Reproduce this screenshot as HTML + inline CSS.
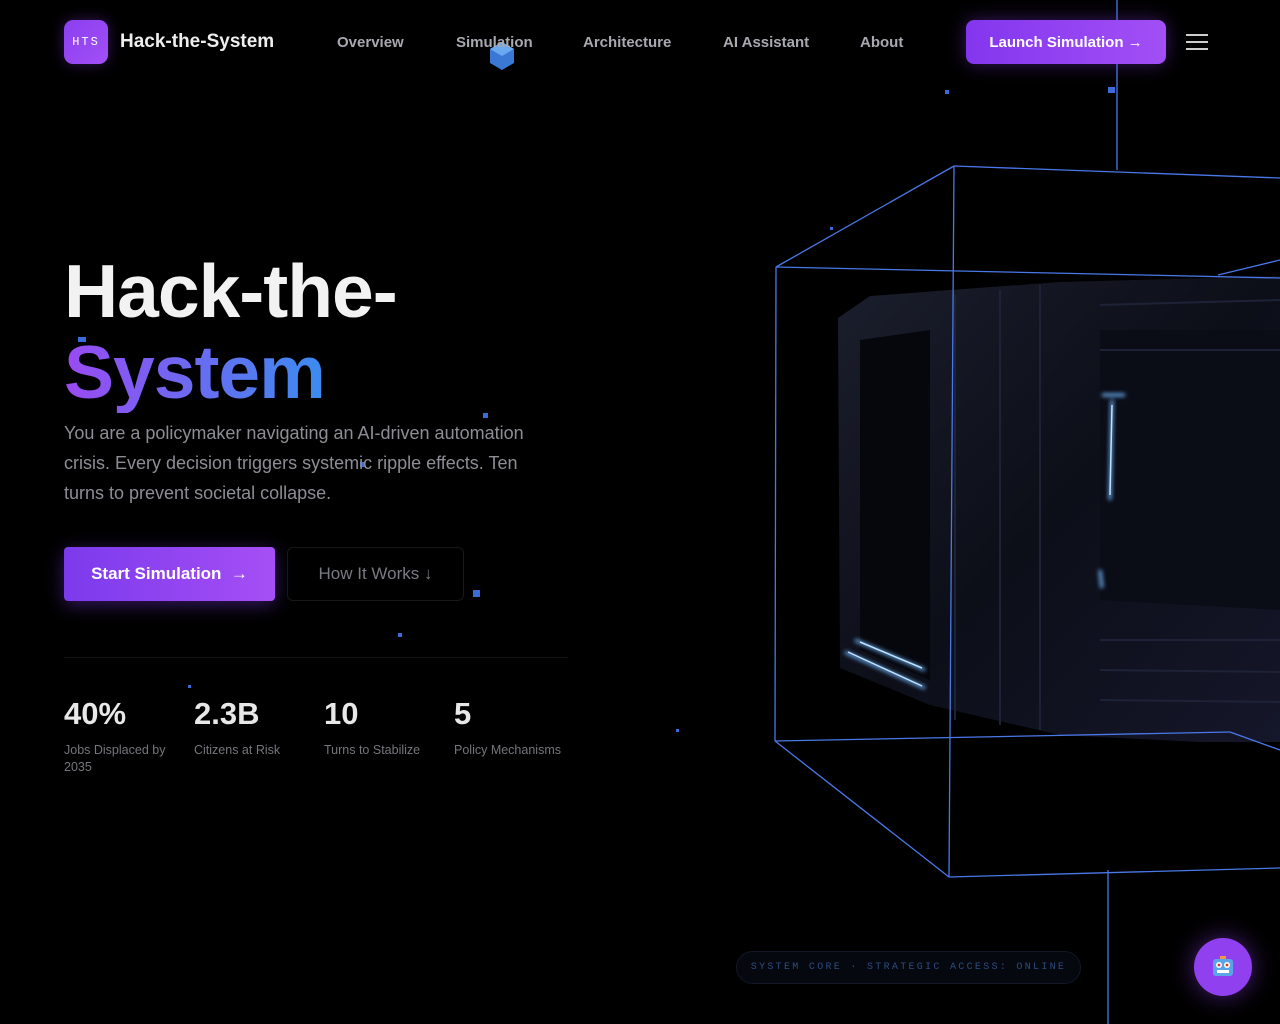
<!DOCTYPE html>
<html><head><meta charset="utf-8"><style>
*{margin:0;padding:0;box-sizing:border-box}
body{width:1280px;height:1024px;background:#000;overflow:hidden;position:relative;font-family:"Liberation Sans",sans-serif;color:#fff}
.abs{position:absolute}
.logo{left:64px;top:20px;width:44px;height:44px;border-radius:9px;background:linear-gradient(135deg,#8b3ff0,#a24ff5);font-family:"Liberation Mono",monospace;font-size:12px;letter-spacing:2px;display:flex;align-items:center;justify-content:center;box-shadow:0 0 14px rgba(140,60,240,.35)}
.brand{left:120px;top:31px;font-size:19px;font-weight:bold;color:#eee}
.nav{top:34px;font-size:15px;color:#a8a8b0;font-weight:bold}
.launch{left:966px;top:20px;width:200px;height:44px;border-radius:8px;background:linear-gradient(90deg,#8336ee,#a24ff5);font-size:15px;font-weight:bold;display:flex;align-items:center;justify-content:center;box-shadow:0 0 18px rgba(140,60,240,.4)}
.h1{left:64px;font-size:75px;font-weight:bold;letter-spacing:-1px;line-height:82px}
.p{left:64px;top:418px;width:490px;font-size:18px;line-height:30px;color:#8d8d95}
.b1{left:64px;top:547px;width:211px;height:54px;border-radius:4px;background:linear-gradient(90deg,#7b3aec,#a64ff5);font-size:17px;font-weight:bold;display:flex;align-items:center;justify-content:center;box-shadow:0 4px 18px rgba(130,60,240,.4)}
.b2{left:287px;top:547px;width:177px;height:54px;border-radius:6px;border:1px solid #181818;font-size:17px;color:#7a7a82;display:flex;align-items:center;justify-content:center}
.stat{top:696px;font-size:31px;font-weight:bold;color:#e8e8e8}
.lab{top:742px;font-size:12.5px;color:#75757c;line-height:17px}
.pill{left:736px;top:951px;width:345px;height:33px;border-radius:17px;background:#05080f;border:1px solid #121826;font-family:"Liberation Mono",monospace;font-size:10px;letter-spacing:2.3px;white-space:nowrap;color:#2f4c7e;display:flex;align-items:center;justify-content:center}
.bot{left:1194px;top:938px;width:58px;height:58px;border-radius:50%;background:#9140ef;box-shadow:0 0 24px rgba(145,64,239,.5);display:flex;align-items:center;justify-content:center}
</style></head><body>
<svg class="abs" style="left:0;top:0" width="1280" height="1024">
<defs>
<linearGradient id="gb" x1="0" y1="0" x2="1" y2="1"><stop offset="0" stop-color="#1b1e2c"/><stop offset=".5" stop-color="#0c0e18"/><stop offset="1" stop-color="#15172a"/></linearGradient>
<filter id="gl"><feGaussianBlur stdDeviation="2"/></filter>
</defs>
<polygon points="838,318 870,296 950,290 1060,282 1280,276 1280,742 1200,742 1060,735 930,705 840,668" fill="url(#gb)"/>
<polygon points="1100,330 1280,330 1280,610 1100,600" fill="#0a0c16"/>
<polygon points="860,340 930,330 930,680 860,650" fill="#06070d"/>
<g stroke="#1e2236" stroke-width="2">
<line x1="955" y1="295" x2="955" y2="720"/><line x1="1000" y1="290" x2="1000" y2="725"/><line x1="1040" y1="285" x2="1040" y2="730"/>
<line x1="1100" y1="640" x2="1280" y2="640"/><line x1="1100" y1="670" x2="1280" y2="672"/><line x1="1100" y1="700" x2="1280" y2="702"/>
<line x1="1100" y1="305" x2="1280" y2="300"/><line x1="1100" y1="350" x2="1280" y2="350"/>
</g>
<g stroke="#6fb6ff" stroke-width="3" filter="url(#gl)">
<line x1="1112" y1="400" x2="1110" y2="500"/><line x1="1102" y1="395" x2="1125" y2="395"/>
<line x1="845" y1="652" x2="925" y2="688"/><line x1="855" y1="640" x2="925" y2="670"/><line x1="1100" y1="570" x2="1102" y2="588"/>
</g>
<g stroke="#bfe2ff" stroke-width="1.5">
<line x1="1112" y1="405" x2="1110" y2="495"/><line x1="848" y1="652" x2="922" y2="686"/><line x1="860" y1="642" x2="922" y2="668"/>
</g>
<g stroke="#4a78e8" stroke-width="1.3" fill="none">
<line x1="1117" y1="0" x2="1117" y2="170"/>
<line x1="1108" y1="870" x2="1108" y2="1024"/>
<line x1="954" y1="166" x2="1280" y2="178"/>
<line x1="776" y1="267" x2="954" y2="166"/>
<line x1="776" y1="267" x2="1280" y2="278"/>
<line x1="1218" y1="275" x2="1280" y2="260"/>
<line x1="776" y1="267" x2="775" y2="741"/>
<line x1="775" y1="741" x2="1230" y2="732"/>
<line x1="1230" y1="732" x2="1280" y2="750"/>
<line x1="775" y1="741" x2="949" y2="877"/>
<line x1="949" y1="877" x2="1280" y2="868"/>
<line x1="954" y1="166" x2="949" y2="877"/>
</g>
<g fill="#3a6bd8">
<polygon points="502,42 514,49 514,63 502,70 490,63 490,49" fill="#3b78d6"/>
<polygon points="502,42 514,49 502,56 490,49" fill="#6aa8f0"/>
<rect x="945" y="90" width="4" height="4"/><rect x="1108" y="87" width="7" height="6"/>
<rect x="830" y="227" width="3" height="3"/><rect x="483" y="413" width="5" height="5"/>
<rect x="360" y="462" width="5" height="5"/><rect x="473" y="590" width="7" height="7"/>
<rect x="398" y="633" width="4" height="4"/><rect x="188" y="685" width="3" height="3"/>
<rect x="676" y="729" width="3" height="3"/><rect x="78" y="337" width="8" height="5"/>
</g>
</svg>
<div class="abs logo">HTS</div>
<div class="abs brand">Hack-the-System</div>
<div class="abs nav" style="left:337px">Overview</div>
<div class="abs nav" style="left:456px">Simulation</div>
<div class="abs nav" style="left:583px">Architecture</div>
<div class="abs nav" style="left:723px">AI Assistant</div>
<div class="abs nav" style="left:860px">About</div>
<div class="abs launch">Launch Simulation →</div>
<div class="abs" style="left:1186px;top:34px;width:22px;height:2px;background:#ccc;box-shadow:0 7px 0 #ccc,0 14px 0 #ccc"></div>
<div class="abs h1" style="top:250px;color:#f2f2f2">Hack-the-</div>
<div class="abs h1" style="top:331px;background:linear-gradient(90deg,#9a4af2,#3a8cf0);-webkit-background-clip:text;color:transparent">System</div>
<div class="abs p">You are a policymaker navigating an AI-driven automation crisis. Every decision triggers systemic ripple effects. Ten turns to prevent societal collapse.</div>
<div class="abs b1">Start Simulation &nbsp;→</div>
<div class="abs b2">How It Works ↓</div>
<div class="abs" style="left:64px;top:657px;width:504px;height:1px;background:#141414"></div>
<div class="abs stat" style="left:64px">40%</div><div class="abs lab" style="left:64px">Jobs Displaced by<br>2035</div>
<div class="abs stat" style="left:194px">2.3B</div><div class="abs lab" style="left:194px">Citizens at Risk</div>
<div class="abs stat" style="left:324px">10</div><div class="abs lab" style="left:324px">Turns to Stabilize</div>
<div class="abs stat" style="left:454px">5</div><div class="abs lab" style="left:454px">Policy Mechanisms</div>
<div class="abs pill">SYSTEM CORE · STRATEGIC ACCESS: ONLINE</div>
<div class="abs bot"><svg width="24" height="22"><rect x="9" y="0" width="6" height="3" fill="#f39a3c"/><rect x="2" y="3" width="20" height="17" rx="3" fill="#5aa5e8"/><circle cx="8" cy="9" r="3" fill="#fff"/><circle cx="16" cy="9" r="3" fill="#fff"/><circle cx="8" cy="9" r="1.4" fill="#d33"/><circle cx="16" cy="9" r="1.4" fill="#d33"/><rect x="6" y="14" width="12" height="3" fill="#fff"/></svg></div>
</body></html>
